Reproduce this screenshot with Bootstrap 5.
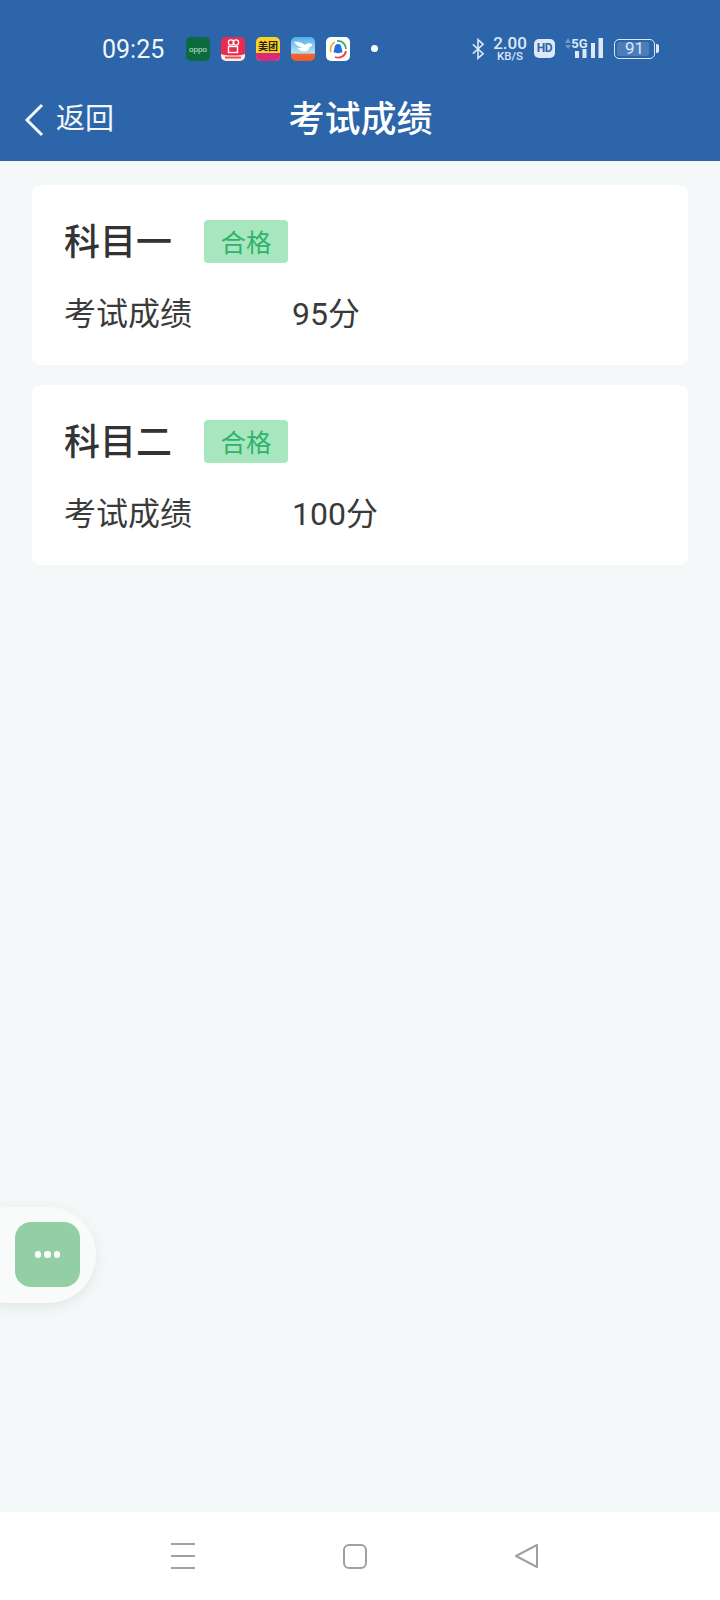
<!doctype html>
<html lang="zh">
<head>
<meta charset="utf-8">
<link href="https://cdn.jsdelivr.net/npm/bootstrap@5.3.0/dist/css/bootstrap.min.css" rel="stylesheet">
<style>
html,body{height:1600px;margin:0}
body{width:720px;background:#f4f8f9;font-family:Roboto,"Noto Sans CJK SC",sans-serif;color:#333;overflow:hidden}
.screen{height:1600px}
.topbar{background:#2c65a9;height:161px;color:#fff;flex:none}
.statusrow{height:80px;padding:17px 0 0 102px}
.clock{font-size:25px;width:84px;line-height:60px;height:58px;color:#f2f6fa}
.appicons{gap:11px;width:164px}
.appico{width:24px;height:24px;display:block;flex:none}
.notedot{width:7px;height:7px;border-radius:50%;background:#fff;margin-left:21px;flex:none}
.sysicons{margin-left:93px;color:#dce8f5}
.speed{width:34px;margin-left:8px;line-height:1;text-align:center;font-weight:500;flex:none}
.speed b{display:block;font-size:17px;font-weight:500;line-height:15px}
.speed i{display:block;font-style:normal;font-size:11.5px;line-height:10px}
.hdtag{width:21px;height:19px;background:#dce8f5;color:#2c65a9;font-size:12px;font-weight:700;border-radius:5px;margin-left:7px;line-height:19px;text-align:center;letter-spacing:-.5px;flex:none}
.signalico{margin-left:8px;flex:none;display:block}
.batt{position:relative;width:41px;height:20px;border:1.5px solid #dce8f5;border-radius:5px;margin-left:10px;font-size:17px;line-height:17px;text-align:center;overflow:hidden;flex:none}
.battfill{background:#4b7db8;position:absolute;left:2px;top:2px;bottom:2px;width:32px;border-radius:2px}
.battnum{position:relative}
.battcap{width:3px;height:9px;background:#dce8f5;border-radius:0 2px 2px 0;margin-left:1px;flex:none}
.navrow{height:81px;position:relative}
.backlink{padding-left:24px;gap:12px;font-size:29px;height:80px;color:#f2f6fa}
.pagetitle{position:absolute;left:0;right:0;top:0;height:78px;line-height:80px;text-align:center;font-size:36px;font-weight:500;margin:0;padding-left:1px}
.content{flex:1 1 auto;padding:24px 32px 0;gap:20px}
.scorecard{background:#fff;border-radius:8px;height:180px;padding:35px 32px 0;border:0}
.subject{font-size:36px;font-weight:500;line-height:43px;width:140px;color:#333;padding-top:2px;margin-bottom:-2px}
.passtag{width:84px;height:43px;background:#a8e6bf;color:#2fb36c;border-radius:4px;font-size:25.5px;line-height:47px;text-align:center}
.scorerow{font-size:32px;line-height:40px;margin-top:31px;color:#3a3a3a}
.scorelabel{width:228px}
.bottomnav{height:88px;background:#fff;flex:none}
.fabwrap{position:absolute;left:-40px;top:1207px;width:136px;height:96px;background:#f9fbfa;border-radius:48px;box-shadow:0 4px 14px rgba(60,90,80,.1)}
.fabbtn{position:absolute;left:55px;top:15px;width:65px;height:65px;background:#92cfa5;border-radius:16px;gap:3px}
.fabbtn span{width:6.5px;height:6.5px;border-radius:50%;background:#fff}
.navico{position:absolute;top:1543px;display:block}
.navmenu{left:170px}
.navhome{left:342px}
.navback{left:514px}
</style>
</head>
<body>
<div class="screen d-flex flex-column position-relative">
  <header class="topbar">
    <div class="statusrow d-flex align-items-center">
      <div class="clock">09:25</div>
      <div class="appicons d-flex align-items-center">
        <svg class="appico" viewBox="0 0 24 24"><rect width="24" height="24" rx="5" fill="#0b6b3f"/><text x="12" y="14.500" font-size="8" text-anchor="middle" fill="#cfe8d8" font-family="Liberation Sans">oppo</text></svg>
        <svg class="appico" viewBox="0 0 24 24"><rect width="24" height="24" rx="5" fill="#ea2a4f"/><path d="M0 17c6 2 18 2 24 0v2a5 5 0 0 1-5 5H5a5 5 0 0 1-5-5z" fill="#fbeee6"/><circle cx="10" cy="5.500" r="2.600" fill="none" stroke="#fff" stroke-width="1.400"/><circle cx="15" cy="5.500" r="2.600" fill="none" stroke="#fff" stroke-width="1.400"/><rect x="7.500" y="9.500" width="9" height="6" fill="none" stroke="#fff" stroke-width="1.400"/><rect x="4" y="19.500" width="16" height="2" fill="#e8534f"/></svg>
        <svg class="appico" viewBox="0 0 24 24"><rect width="24" height="24" rx="5" fill="#fbd21f"/><path d="M0 16h24v3a5 5 0 0 1-5 5H5a5 5 0 0 1-5-5z" fill="#d62b7a"/><text x="12" y="13" font-size="10" font-weight="700" text-anchor="middle" fill="#222" font-family="Noto Sans CJK SC">美团</text></svg>
        <svg class="appico" viewBox="0 0 24 24"><defs><linearGradient id="skyg" x1="0" y1="0" x2="0" y2="1"><stop offset="0" stop-color="#4fb1ea"/><stop offset=".68" stop-color="#b5e2f7"/><stop offset=".7" stop-color="#f06a2c"/><stop offset="1" stop-color="#f0592c"/></linearGradient></defs><rect width="24" height="24" rx="5" fill="url(#skyg)"/><path d="M3 5c5-1 8 1 11 3 2-2 5-2 7-1 1 2-1 3-3 3 1 3-3 5-7 4-3-1-4-2-5-3 2 0 4 0 5-1-3 0-6-2-8-5z" fill="#fff"/></svg>
        <svg class="appico" viewBox="0 0 24 24"><rect width="24" height="24" rx="5" fill="#fff"/><path d="M5 15A8 8 0 0 1 9 5" fill="none" stroke="#f2b01e" stroke-width="1.800"/><path d="M11 4a8 8 0 0 1 9 8" fill="none" stroke="#2fb36c" stroke-width="1.800"/><path d="M20 14a8 8 0 0 1-11 6" fill="none" stroke="#e8443a" stroke-width="1.800"/><path d="M12 7c2.500 0 3.500 2 3.500 4l1 4c-1 1-2 .5-2 .5-1 1-4 1-5 0 0 0-1 .5-2-.5l1-4C8.500 9 9.500 7 12 7z" fill="#1f6fe0"/></svg>
      </div>
      <span class="notedot"></span>
      <div class="sysicons d-flex align-items-center">
        <svg width="14" height="22" viewBox="0 0 15 22" fill="none" stroke="#dce8f5" stroke-width="1.700"><path d="M2 6l11 10-5.500 5V1L13 6 2 16"/></svg>
        <div class="speed"><b>2.00</b><i>KB/S</i></div>
        <div class="hdtag">HD</div>
        <svg class="signalico" width="41" height="24" viewBox="0 0 41 24"><path d="M2 6l3-5 3 5zM2 8l3 4 3-4z" fill="#6f97c6"/><text x="16.500" y="11" font-size="13" font-weight="700" text-anchor="middle" fill="#dce8f5" font-family="Roboto">5G</text><rect x="12" y="14" width="4" height="7" fill="#dce8f5"/><rect x="19.500" y="12" width="4" height="9" fill="#dce8f5"/><rect x="28" y="6" width="4" height="15" fill="#dce8f5"/><rect x="35.500" y="1" width="4.500" height="20" fill="#dce8f5"/></svg>
        <div class="batt"><span class="battfill"></span><span class="battnum">91</span></div>
        <span class="battcap"></span>
      </div>
    </div>
    <div class="navrow">
      <div class="backlink d-flex align-items-center">
        <svg width="20" height="34" viewBox="0 0 20 34" fill="none" stroke="#f2f6fa" stroke-width="3"><path d="M18 2L3 17l15 15"/></svg>
        <span>返回</span>
      </div>
      <h1 class="pagetitle">考试成绩</h1>
    </div>
  </header>
  <main class="content d-flex flex-column">
    <section class="scorecard">
      <div class="d-flex align-items-center"><div class="subject">科目一</div><span class="passtag">合格</span></div>
      <div class="scorerow d-flex"><span class="scorelabel">考试成绩</span><span>95分</span></div>
    </section>
    <section class="scorecard">
      <div class="d-flex align-items-center"><div class="subject">科目二</div><span class="passtag">合格</span></div>
      <div class="scorerow d-flex"><span class="scorelabel">考试成绩</span><span>100分</span></div>
    </section>
  </main>
  <footer class="bottomnav"></footer>
  <div class="fabwrap"><div class="fabbtn d-flex align-items-center justify-content-center"><span></span><span></span><span></span></div></div>
  <svg class="navico navmenu" width="26" height="26" viewBox="0 0 26 26" stroke="#a0a0a0" stroke-width="2"><path d="M1 1h24M1 13h24M1 25h24"/></svg>
  <svg class="navico navhome" width="26" height="26" viewBox="0 0 26 26" fill="none" stroke="#a0a0a0" stroke-width="2"><rect x="2" y="2" width="22" height="23" rx="5"/></svg>
  <svg class="navico navback" width="26" height="26" viewBox="0 0 26 26" fill="none" stroke="#a0a0a0" stroke-width="2" stroke-linejoin="round"><path d="M23 2v22L2 13z"/></svg>
</div>
<script src="https://cdn.jsdelivr.net/npm/bootstrap@5.3.0/dist/js/bootstrap.bundle.min.js"></script>
</body>
</html>
